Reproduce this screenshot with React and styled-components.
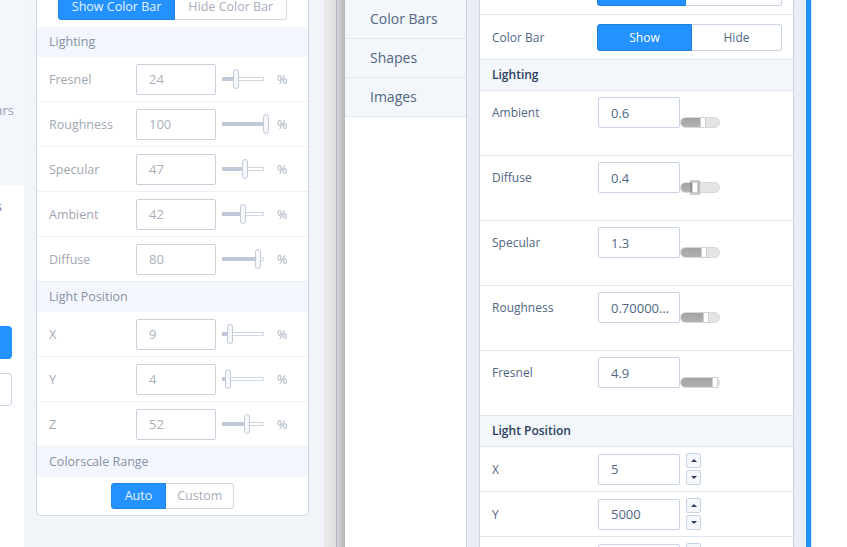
import React from "react";
import styled, { createGlobalStyle } from "styled-components";

const GlobalStyle = createGlobalStyle`
    html, body {
        margin: 0;
        padding: 0;
        background: #fff;
    }
    body {
        font-family: "Open Sans", "Noto Sans", Arial, sans-serif;
    }
    * {
        box-sizing: border-box;
    }
`;

const Page = styled.div`
    display: flex;
    width: 847px;
    height: 547px;
    overflow: hidden;
    background: #fff;
`;

// sliver of a third editor cut off at the left edge
const Sliver = styled.div`
    width: 24px;
    flex: none;
    display: flex;
    flex-direction: column;
    background: #f3f6fa;
`;

const SliverText = styled.div`
    display: flex;
    justify-content: flex-end;
    height: ${(p) => p.$height}px;
    padding: ${(p) => p.$top}px ${(p) => p.$right}px 0 0;
    font-size: 13px;
    line-height: 18px;
    color: ${(p) => p.$color};
    white-space: nowrap;
`;

const SliverBody = styled.div`
    flex: 1;
    display: flex;
    flex-direction: column;
    background: #fff;
`;

const SliverButton = styled.div`
    width: 12px;
    height: 33px;
    margin-top: ${(p) => p.$gap}px;
    border-radius: 0 4px 4px 0;
    background: ${(p) => (p.$primary ? "#2391fe" : "#fff")};
    border: 1px solid ${(p) => (p.$primary ? "#2391fe" : "#c8d4e3")};
    border-left: 0;
`;

// faded "old" editor panel
const OldArea = styled.div`
    width: 300px;
    flex: none;
    background: #f1f4f8;
    padding: 0 15px 0 12px;
`;

const OldPanel = styled.div`
    margin-top: -11px;
    background: #fff;
    border: 1px solid #cdd6e3;
    border-top: 0;
    border-radius: 0 0 5px 5px;
    overflow: hidden;
`;

const OldToggleRow = styled.div`
    display: flex;
    justify-content: center;
    align-items: ${(p) => (p.$top ? "flex-end" : "center")};
    height: 38px;
    padding-bottom: ${(p) => (p.$top ? 7 : 0)}px;
`;

const OldHeader = styled.div`
    height: 30px;
    line-height: 30px;
    padding-left: 12px;
    background: #f3f7fd;
    color: #8792a6;
    font-size: 12.5px;
`;

const OldRow = styled.div`
    display: flex;
    align-items: center;
    height: 45px;
    padding: 0 12px;
    border-bottom: 1px solid #eef2f7;
`;

const OldLabel = styled.div`
    width: 87px;
    flex: none;
    font-size: 12.5px;
    color: #a0a7b2;
`;

const OldInput = styled.input`
    width: 80px;
    height: 31px;
    flex: none;
    padding: 0 0 0 12px;
    border: 1px solid #c9d1dd;
    border-radius: 2px;
    font: 13px "Open Sans", "Noto Sans", sans-serif;
    color: #a9b1bc;
    background: #fff;
    outline: none;
`;

const OldSlider = styled.div`
    position: relative;
    width: 42px;
    height: 20px;
    margin-left: 6px;
    flex: none;
`;

const OldTrack = styled.div`
    position: absolute;
    left: 0;
    right: 0;
    top: 8px;
    height: 4px;
    border: 1px solid #cfd7e2;
    border-radius: 1px;
    background: #fff;
`;

const OldFill = styled.div`
    position: absolute;
    left: 0;
    top: 8px;
    height: 4px;
    width: ${(p) => 4 + p.$value * 0.395}px;
    background: #c0c9d7;
`;

const OldThumb = styled.div`
    position: absolute;
    top: 0;
    left: ${(p) => 1.5 + p.$value * 0.395}px;
    width: 6px;
    height: 20px;
    border: 1px solid #c3cbd8;
    border-radius: 3px;
    background: #f5f7fb;
`;

const OldPercent = styled.div`
    margin-left: 13px;
    font-size: 12.5px;
    color: #a9b1bc;
`;

const OldSegment = styled.div`
    height: 26px;
    line-height: 24px;
    padding: 0 ${(p) => p.$pad || 13}px;
    font-size: 12.5px;
    border: 1px solid ${(p) => (p.$active ? "#1f84e6" : "#d0d8e3")};
    background: ${(p) => (p.$active ? "#2391fe" : "#fff")};
    color: ${(p) => (p.$active ? "#e4f1ff" : "#a6aebb")};
    & + & {
        border-left: 0;
    }
    &:first-child {
        border-radius: 3px 0 0 3px;
    }
    &:last-child {
        border-radius: 0 3px 3px 0;
    }
`;

const Seg = styled.div`
    display: flex;
`;

// splitter between the two versions
const Divider = styled.div`
    width: 21px;
    flex: none;
    background: linear-gradient(
        to right,
        #ebebec 0,
        #dedfe0 12px,
        #aab5c5 12px,
        #aab5c5 13px,
        #d6d6d6 13px,
        #b4b4b4 21px
    );
`;

const Nav = styled.div`
    width: 122px;
    flex: none;
    background: #fff;
    border-right: 1px solid #c8d4e3;
`;

const NavItem = styled.div`
    height: 39px;
    line-height: 38px;
    padding-left: 25px;
    border-bottom: 1px solid #dfe7f1;
    background: #f3f6fa;
    font-size: 14px;
    color: #506784;
`;

const Gutter = styled.div`
    width: ${(p) => p.$w}px;
    flex: none;
    background: #e9eef7;
`;

const Accent = styled.div`
    width: 6px;
    flex: none;
    background: #2391fe;
    border-right: 1px solid #d3e6fc;
`;

const Panel = styled.div`
    width: 315px;
    flex: none;
    display: flex;
    flex-direction: column;
    background: #fff;
    border-left: 1px solid #c8d4e3;
    border-right: 1px solid #c8d4e3;
`;

const Row = styled.div`
    display: flex;
    align-items: ${(p) => (p.$tall ? "flex-start" : "center")};
    height: ${(p) => (p.$tall ? 65 : 45)}px;
    margin-top: ${(p) => p.$shift || 0}px;
    padding: ${(p) => (p.$tall ? "6px 0 0 12px" : "0 0 0 12px")};
    border-bottom: 1px solid #dfe6f0;
    flex: none;
`;

const Header = styled.div`
    height: 31px;
    line-height: 30px;
    padding-left: 12px;
    background: #f3f6fa;
    border-bottom: 1px solid #dfe6f0;
    font-size: 12px;
    font-weight: 600;
    color: #2a3f5f;
    flex: none;
`;

const Label = styled.div`
    width: 106px;
    flex: none;
    font-size: 12px;
    line-height: 31px;
    color: #506784;
`;

const Field = styled.input`
    width: 82px;
    height: 31px;
    flex: none;
    padding: 0 7px 0 12px;
    border: 1px solid #c8d4e3;
    border-radius: 2px;
    font: 13px "Open Sans", "Noto Sans", sans-serif;
    color: #506784;
    background: #fff;
    text-overflow: ellipsis;
    outline: none;
`;

const Toggle = styled.div`
    display: flex;
    margin-left: -1px;
`;

const ToggleButton = styled.div`
    width: ${(p) => p.$w}px;
    height: 27px;
    line-height: 25px;
    text-align: center;
    font-size: 12px;
    border: 1px solid ${(p) => (p.$active ? "#1f7fdb" : "#c8d4e3")};
    background: ${(p) => (p.$active ? "#2391fe" : "#fff")};
    color: ${(p) => (p.$active ? "#fff" : "#506784")};
    & + & {
        border-left: 0;
    }
    &:first-child {
        border-radius: 3px 0 0 3px;
    }
    &:last-child {
        border-radius: 0 3px 3px 0;
    }
`;

const Pill = styled.div`
    position: relative;
    width: 40px;
    height: 11px;
    margin-top: 20px;
    flex: none;
    border-radius: 6px;
    border: 1px solid #d8d8d8;
    background: #e4e4e4;
`;

const PillFill = styled.div`
    width: ${(p) => p.$fill}px;
    height: 100%;
    border-radius: 5px 0 0 5px;
    background: linear-gradient(#a3a3a3, #b1b1b1);
`;

const PillThumb = styled.div`
    position: absolute;
    top: -1px;
    left: ${(p) => p.$fill - 1}px;
    width: 6px;
    height: 11px;
    background: #fff;
    border: 1px solid #cfcfcf;
    box-shadow: ${(p) =>
        p.$active ? "0 0 0 2px rgba(110, 110, 110, 0.35)" : "none"};
`;

const Spinner = styled.div`
    display: flex;
    flex-direction: column;
    gap: 2px;
    margin-left: 6px;
`;

const SpinButton = styled.div`
    width: 15px;
    height: 15px;
    display: flex;
    align-items: center;
    justify-content: center;
    border: 1px solid #c8d4e3;
    border-radius: 2px;
    background: #f3f6fa;
    &::after {
        content: "";
        border-left: 3px solid transparent;
        border-right: 3px solid transparent;
        border-${(p) => (p.$up ? "bottom" : "top")}: 3px solid #2a3f5f;
    }
`;

const Rest = styled.div`
    flex: 1;
    background: #fff;
`;

const oldLighting = [
    ["Fresnel", 24],
    ["Roughness", 100],
    ["Specular", 47],
    ["Ambient", 42],
    ["Diffuse", 80],
];

const oldPosition = [
    ["X", 9],
    ["Y", 4],
    ["Z", 52],
];

const lighting = [
    { label: "Ambient", value: "0.6", fill: 20 },
    { label: "Diffuse", value: "0.4", fill: 12, active: true },
    { label: "Specular", value: "1.3", fill: 21 },
    { label: "Roughness", value: "0.7000000000000001", fill: 23 },
    { label: "Fresnel", value: "4.9", fill: 32 },
];

const position = [
    ["X", "5"],
    ["Y", "5000"],
    ["Z", "1"],
];

function OldSliderRow({ label, value }) {
    return (
        <OldRow>
            <OldLabel>{label}</OldLabel>
            <OldInput readOnly value={value} />
            <OldSlider>
                <OldTrack />
                <OldFill $value={value} />
                <OldThumb $value={value} />
            </OldSlider>
            <OldPercent>%</OldPercent>
        </OldRow>
    );
}

export default function App() {
    return (
        <Page>
            <GlobalStyle />
            <Sliver>
                <SliverText $height={185} $top={101} $right={10} $color="#96a1b2">
                    Color Bars
                </SliverText>
                <SliverBody>
                    <SliverText $height={30} $top={12} $right={22} $color="#6d7a8f">
                        Colorscales
                    </SliverText>
                    <SliverButton $primary $gap={111} />
                    <SliverButton $gap={14} />
                </SliverBody>
            </Sliver>

            <OldArea>
                <OldPanel>
                    <OldToggleRow $top>
                        <Seg>
                            <OldSegment $active>Show Color Bar</OldSegment>
                            <OldSegment>Hide Color Bar</OldSegment>
                        </Seg>
                    </OldToggleRow>
                    <OldHeader>Lighting</OldHeader>
                    {oldLighting.map(([label, value]) => (
                        <OldSliderRow key={label} label={label} value={value} />
                    ))}
                    <OldHeader>Light Position</OldHeader>
                    {oldPosition.map(([label, value]) => (
                        <OldSliderRow key={label} label={label} value={value} />
                    ))}
                    <OldHeader>Colorscale Range</OldHeader>
                    <OldToggleRow>
                        <Seg>
                            <OldSegment $active>Auto</OldSegment>
                            <OldSegment $pad={11}>Custom</OldSegment>
                        </Seg>
                    </OldToggleRow>
                </OldPanel>
            </OldArea>

            <Divider />

            <Nav>
                <NavItem>Color Bars</NavItem>
                <NavItem>Shapes</NavItem>
                <NavItem>Images</NavItem>
            </Nav>
            <Gutter $w={12} />

            <Panel>
                <Row $shift={-30}>
                    <Label>Color Bar</Label>
                    <Toggle>
                        <ToggleButton $active $w={89}>
                            Vertical
                        </ToggleButton>
                        <ToggleButton $w={96}>Horizontal</ToggleButton>
                    </Toggle>
                </Row>
                <Row>
                    <Label>Color Bar</Label>
                    <Toggle>
                        <ToggleButton $active $w={95}>
                            Show
                        </ToggleButton>
                        <ToggleButton $w={90}>Hide</ToggleButton>
                    </Toggle>
                </Row>
                <Header>Lighting</Header>
                {lighting.map((l) => (
                    <Row $tall key={l.label}>
                        <Label>{l.label}</Label>
                        <Field readOnly value={l.value} />
                        <Pill>
                            <PillFill $fill={l.fill} />
                            <PillThumb $fill={l.fill} $active={l.active} />
                        </Pill>
                    </Row>
                ))}
                <Header>Light Position</Header>
                {position.map(([label, value]) => (
                    <Row key={label}>
                        <Label>{label}</Label>
                        <Field readOnly value={value} />
                        <Spinner>
                            <SpinButton $up />
                            <SpinButton />
                        </Spinner>
                    </Row>
                ))}
            </Panel>

            <Gutter $w={12} />
            <Accent />
            <Rest />
        </Page>
    );
}
